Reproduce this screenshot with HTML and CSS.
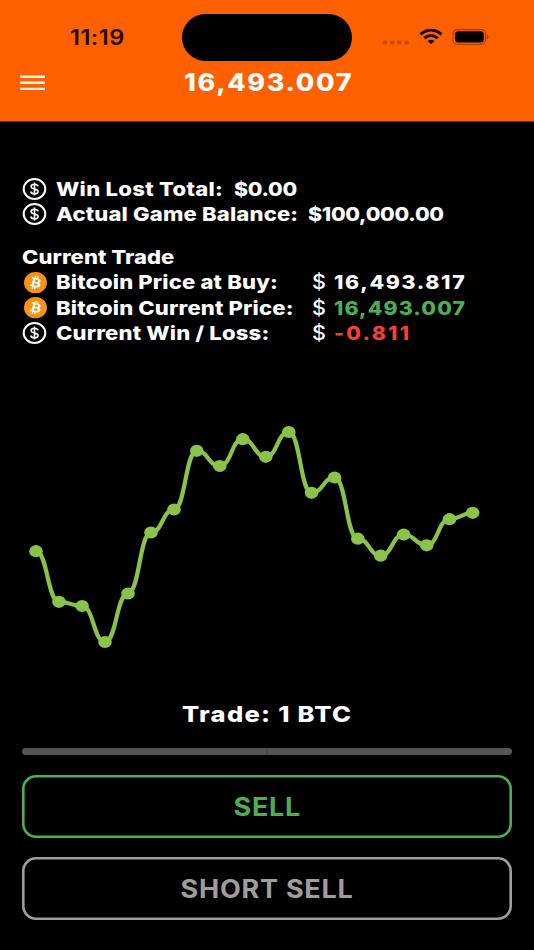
FILE: index.html
```
<!DOCTYPE html>
<html lang="en">
<head>
<meta charset="utf-8">
<title>Bitcoin Trade</title>
<link rel="stylesheet" href="styles.css">
</head>
<body>
<svg class="defs" width="0" height="0">
  <symbol id="dollar" viewBox="0 0 26 24" preserveAspectRatio="none">
    <ellipse cx="12.500" cy="12" rx="10.800" ry="10" fill="none" stroke="#fff" stroke-width="2"/>
    <path d="M16.100 9.400C15.700 7.900 14.300 7.300 12.500 7.300C10.500 7.300 9.100 8.100 9.100 9.600C9.100 11.200 10.600 11.600 12.500 12C14.600 12.400 16.100 12.900 16.100 14.500C16.100 16 14.600 16.800 12.500 16.800C10.500 16.800 9.100 16.100 8.800 14.500M12.500 5.400V18.600" fill="none" stroke="#fff" stroke-width="1.600"/>
  </symbol>
  <symbol id="bitcoin" viewBox="0 0 24 24" preserveAspectRatio="none">
    <circle cx="12" cy="12" r="11" fill="#fff"/>
    <path fill="#f7931a" d="M23.638 14.904c-1.602 6.43-8.113 10.34-14.542 8.736C2.67 22.05-1.244 15.525.362 9.105 1.962 2.67 8.475-1.243 14.9.358c6.43 1.605 10.342 8.115 8.738 14.548v-.002zm-6.35-4.613c.24-1.59-.974-2.45-2.64-3.03l.54-2.153-1.315-.33-.525 2.107c-.345-.087-.705-.167-1.064-.25l.526-2.127-1.32-.33-.54 2.165c-.285-.067-.565-.132-.84-.2l-1.815-.45-.35 1.407s.975.225.955.236c.535.136.63.486.615.766l-1.477 5.92c-.075.166-.24.406-.614.314.015.02-.96-.24-.96-.24l-.66 1.51 1.71.426.93.242-.54 2.19 1.32.327.54-2.17c.36.1.705.19 1.05.273l-.51 2.154 1.32.33.545-2.19c2.24.427 3.93.257 4.64-1.774.57-1.637-.03-2.58-1.217-3.196.854-.193 1.5-.76 1.68-1.93h.01zm-3.01 4.22c-.404 1.64-3.157.75-4.05.53l.72-2.9c.896.23 3.757.67 3.33 2.37zm.41-4.24c-.37 1.49-2.662.735-3.405.55l.654-2.64c.744.18 3.137.524 2.75 2.084v.006z"/>
  </symbol>
</svg>

<header class="header">
  <div class="status">
    <div class="clock"><span class="wide time">11:19</span></div>
    <div class="island"></div>
    <svg class="indicators" width="112" height="24" viewBox="0 0 112 24">
      <g fill="#c94d05"><rect x="2.700" y="11.500" width="4.600" height="4" rx="1.600"/><rect x="9.900" y="11.500" width="4.600" height="4" rx="1.600"/><rect x="17.100" y="11.500" width="4.600" height="4" rx="1.600"/><rect x="24.300" y="11.500" width="4.600" height="4" rx="1.600"/></g>
      <g fill="none" stroke="#160500" stroke-width="2.900">
        <path d="M40.500 5.400Q51 -3.400 61.500 5.400"/>
        <path d="M44.300 9.100Q51 3.700 57.700 9.100"/>
      </g>
      <path d="M47.600 12.100Q51 9.500 54.400 12.100L51 15.200Z" fill="#160500"/>
      <rect x="73.100" y="0.600" width="32.400" height="14.600" rx="4.300" fill="none" stroke="#9d3c05" stroke-width="1.100"/>
      <rect x="75" y="2.300" width="28.800" height="11.200" rx="3" fill="#060100"/>
      <path d="M107.300 5.800Q109.100 7.900 107.300 10Z" fill="#8a3404" stroke="#8a3404" stroke-width=".6"/>
    </svg>
  </div>
  <div class="navbar">
    <svg class="menu" width="25" height="18" viewBox="0 0 25 18"><path d="M.3 2.700H25M.3 8.800H25M.3 14.900H25" stroke="#fff3ea" stroke-width="2.400"/></svg>
    <h1 class="wide title">16,493.007</h1>
  </div>
</header>

<main class="main">
  <section class="totals">
    <div class="row"><svg class="icon"><use href="#dollar"/></svg><div class="win-label"><span class="wide label win">Win Lost Total:</span></div><span class="wide cash">$0.00</span></div>
    <div class="row"><svg class="icon"><use href="#dollar"/></svg><div class="balance-label"><span class="wide label">Actual Game Balance:</span></div><span class="wide cash">$100,000.00</span></div>
  </section>

  <section class="trade">
    <h2 class="heading"><span class="wide label">Current Trade</span></h2>
    <div class="row"><svg class="icon btc"><use href="#bitcoin"/></svg><div class="price-label"><span class="wide label">Bitcoin Price at Buy:</span></div><span class="sign">$</span><span class="wide price buy">16,493.817</span></div>
    <div class="row"><svg class="icon btc"><use href="#bitcoin"/></svg><div class="price-label"><span class="wide label">Bitcoin Current Price:</span></div><span class="sign">$</span><span class="wide price up">16,493.007</span></div>
    <div class="row"><svg class="icon"><use href="#dollar"/></svg><div class="price-label"><span class="wide label">Current Win / Loss:</span></div><span class="sign">$</span><span class="wide price down">-0.811</span></div>
  </section>

  <svg class="chart" id="chart" width="534" height="240" viewBox="0 420 534 240"></svg>

  <section class="order">
    <div class="amount"><span class="wide">Trade: 1 BTC</span></div>
    <div class="slider"><i></i></div>
    <button class="button sell"><span>SELL</span></button>
    <button class="button short"><span>SHORT SELL</span></button>
  </section>
</main>
<script src="chart.js"></script>
</body>
</html>
```
FILE: styles.css
```
* { box-sizing: border-box; }
body {
  margin: 0;
  width: 534px;
  height: 950px;
  overflow: hidden;
  background: #000;
  color: #fff;
  font-family: Inter, "Liberation Sans", sans-serif;
}
h1, h2 { margin: 0; }
.defs { display: block; position: absolute; }
.wide {
  display: inline-block;
  transform: scaleX(1.12);
  transform-origin: left center;
  white-space: nowrap;
}

.header { height: 122px; background: #ff6000; border-bottom: 1px solid #702a00; }
.status { display: flex; height: 61px; padding-top: 14px; }
.clock { width: 182px; padding: 11px 0 0 70px; }
.time { font-size: 21px; line-height: 26px; font-weight: 600; letter-spacing: .4px; color: #260c00; }
.island { width: 170px; height: 47px; border-radius: 24px; background: #000; }
.indicators { margin: 15px 0 0 28px; }
.navbar { display: flex; height: 44px; align-items: center; padding-left: 20px; }
.menu { margin-right: 138.500px; }
.title { font-size: 24px; font-weight: 800; line-height: 30px; letter-spacing: 1.450px; }

.main { padding-top: 55px; }
.row { display: flex; align-items: center; height: 25.300px; padding-left: 22px; font-size: 19px; font-weight: 800; line-height: 25px; }
.icon { flex: none; width: 26px; height: 24px; margin-right: 7.500px; }
.icon.btc { width: 23px; height: 21.500px; margin: 0 8.500px 0 2px; }
.totals .icon { margin-top: -1px; }
.label { font-size: 19px; font-weight: 800; letter-spacing: .15px; transform: scaleX(1.16); }
.win { letter-spacing: .25px; }
.win-label { width: 178px; }
.balance-label { width: 252.500px; }
.cash { letter-spacing: -.25px; }
.price-label { width: 256.500px; }
.sign { width: 21.500px; font-size: 20px; font-weight: 500; transform: scaleX(1.08); transform-origin: left center; }
.price { letter-spacing: 1.500px; }
.price.buy { letter-spacing: 1.500px; }
.price.up { color: #4caf50; letter-spacing: 1px; }
.price.down { color: #f44336; letter-spacing: 2px; }
.heading { height: 25px; padding-left: 21.500px; line-height: 25px; font-size: 19px; }
.heading .label { letter-spacing: .05px; }
.trade { margin-top: 17.500px; }

.chart { display: block; margin-top: 74px; }
.chart path { fill: none; stroke: #8bc34a; stroke-width: 4.200; }
.chart ellipse { fill: #8bc34a; }

.order { padding: 0 22px; }
.amount { margin-top: 39.500px; padding-left: 160px; height: 30px; font-size: 22px; font-weight: 800; line-height: 30px; }
.amount .wide { letter-spacing: 1.100px; transform: scaleX(1.16); }
.slider { display: flex; justify-content: center; height: 7px; margin-top: 19px; border-radius: 4px; background: #555; }
.slider i { width: 2px; background: #613b3b; }
.button {
  display: flex;
  align-items: center;
  justify-content: center;
  width: 490px;
  height: 63px;
  margin: 20px 0 0;
  padding: 0;
  border: 0;
  box-shadow: inset 0 0 0 2.600px currentColor;
  border-radius: 14px;
  background: none;
  font: 700 25px/30px Inter, "Liberation Sans", sans-serif;
  letter-spacing: .7px;
}
.button span { transform: scaleX(1.08); }
.sell { color: #4caf50; }
.short { color: #9e9e9e; margin-top: 19px; }
```
FILE: chart.js
```
const points = [
  [36, 551.2], [59, 601.8], [82.1, 606], [105, 642], [128, 593.5],
  [151, 532.5], [174, 509.5], [196.8, 450.8], [219.8, 466], [242.8, 439.2],
  [265.8, 456.8], [288.8, 432], [311.6, 492.8], [334.6, 477.5], [357.8, 538.7],
  [380.7, 555.6], [403.7, 534.5], [426.7, 545.3], [449.5, 519.2], [472.7, 512.8]
];
let d = `M${points[0]}`;
for (let i = 1; i < points.length; i++) {
  const [x0, y0] = points[i - 1];
  const [x1, y1] = points[i];
  const mid = (x0 + x1) / 2;
  d += `C${mid} ${y0} ${mid} ${y1} ${x1} ${y1}`;
}
document.getElementById('chart').innerHTML =
  `<path d="${d}"/>` +
  points.map(([x, y]) => `<ellipse cx="${x}" cy="${y}" rx="6.8" ry="6.1"/>`).join('');
```
